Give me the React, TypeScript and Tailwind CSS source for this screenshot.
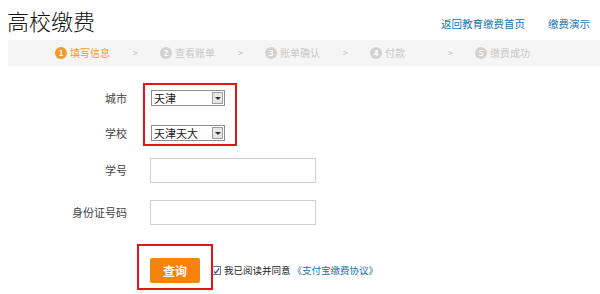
import React from "react";

const steps = ["填写信息", "查看账单", "账单确认", "付款", "缴费成功"];

function Select({ value }: { value: string }) {
  return (
    <div className="flex h-[16px] w-[74px] items-center justify-between border border-[#8e8e8e] bg-white pl-[2px] pr-[1px]">
      <span className="text-[11px] leading-[14px] text-[#222]">{value}</span>
      <div className="flex h-[12px] w-[11px] items-center justify-center border border-[#a0a0a0] bg-[#e6e6e6]">
        <div className="h-0 w-0 border-x-[3px] border-t-[3px] border-x-transparent border-t-[#333]" />
      </div>
    </div>
  );
}

export default function App() {
  return (
    <div className="relative h-[294px] w-[600px] overflow-hidden bg-white font-['Noto_Sans_CJK_SC',sans-serif]">
      {/* header */}
      <div className="flex h-[40px] items-start justify-between">
        <div className="pl-[7px] pt-[5px] text-[22px] font-light leading-[30px] text-[#111]">高校缴费</div>
        <div className="flex gap-[23px] pr-[10px] pt-[16px] text-[10.5px] leading-[16px] text-[#2174b0]">
          <span>返回教育缴费首页</span>
          <span>缴费演示</span>
        </div>
      </div>
      {/* steps bar */}
      <div className="ml-[8px] flex h-[26px] items-center bg-[#f5f5f5] pl-[47px] text-[10px] leading-[14px] text-[#c8c8c8]">
        {steps.map((s, i) => (
          <React.Fragment key={s}>
            <div className="flex w-[78px] items-center gap-[3px]">
              <div
                className={`flex h-[12px] w-[12px] items-center justify-center rounded-full text-[8px] font-bold leading-none text-white ${
                  i === 0 ? "bg-[#f39a2b]" : "bg-[#d2d2d2]"
                }`}
              >
                {i + 1}
              </div>
              <span className={i === 0 ? "text-[#f39a2b]" : ""}>{s}</span>
            </div>
            {i < 4 && <div className="w-[27px] text-[9px] text-[#bbb]">&gt;</div>}
          </React.Fragment>
        ))}
      </div>
      {/* form */}
      <div className="mt-[17px] text-[11px] text-[#444]">
        <div className="relative">
          <div className="flex h-[30px] items-center">
            <div className="w-[127px] text-right">城市</div>
            <div className="ml-[24px]">
              <Select value="天津" />
            </div>
          </div>
          <div className="mt-[5px] flex h-[30px] items-center">
            <div className="w-[127px] text-right">学校</div>
            <div className="ml-[24px]">
              <Select value="天津天大" />
            </div>
          </div>
          <div className="absolute left-[143px] top-0 h-[63px] w-[94px] border-2 border-[#e4141b]" />
        </div>
        <div className="mt-[10px] flex h-[25px] items-center">
          <div className="w-[127px] text-right">学号</div>
          <div className="ml-[23px] h-[25px] w-[166px] border border-[#cfcfcf] bg-white" />
        </div>
        <div className="mt-[17px] flex h-[25px] items-center">
          <div className="w-[127px] text-right">身份证号码</div>
          <div className="ml-[23px] h-[25px] w-[166px] border border-[#cfcfcf] bg-white" />
        </div>
        <div className="relative mt-[33px] flex h-[25px] items-center">
          <div className="ml-[150px] flex h-[25px] w-[50px] items-center justify-center rounded-[2px] bg-[#f5840c] text-[12px] font-bold text-white">
            查询
          </div>
          <div className="ml-[12px] flex h-[9px] w-[9px] items-center justify-center border border-[#7a7a7a] bg-white">
            <svg viewBox="0 0 8 8" className="h-[8px] w-[8px]">
              <path d="M1 4.5 L3 6.5 L7 1" fill="none" stroke="#2046c8" strokeWidth="1.3" />
            </svg>
          </div>
          <span className="ml-[3px] text-[9.5px] text-[#222]">我已阅读并同意</span>
          <span className="ml-[2px] text-[9.5px] text-[#2174b0]">《支付宝缴费协议》</span>
          <div className="absolute left-[137px] top-[-14px] h-[46px] w-[76px] border-2 border-[#e4141b]" />
        </div>
      </div>
    </div>
  );
}
